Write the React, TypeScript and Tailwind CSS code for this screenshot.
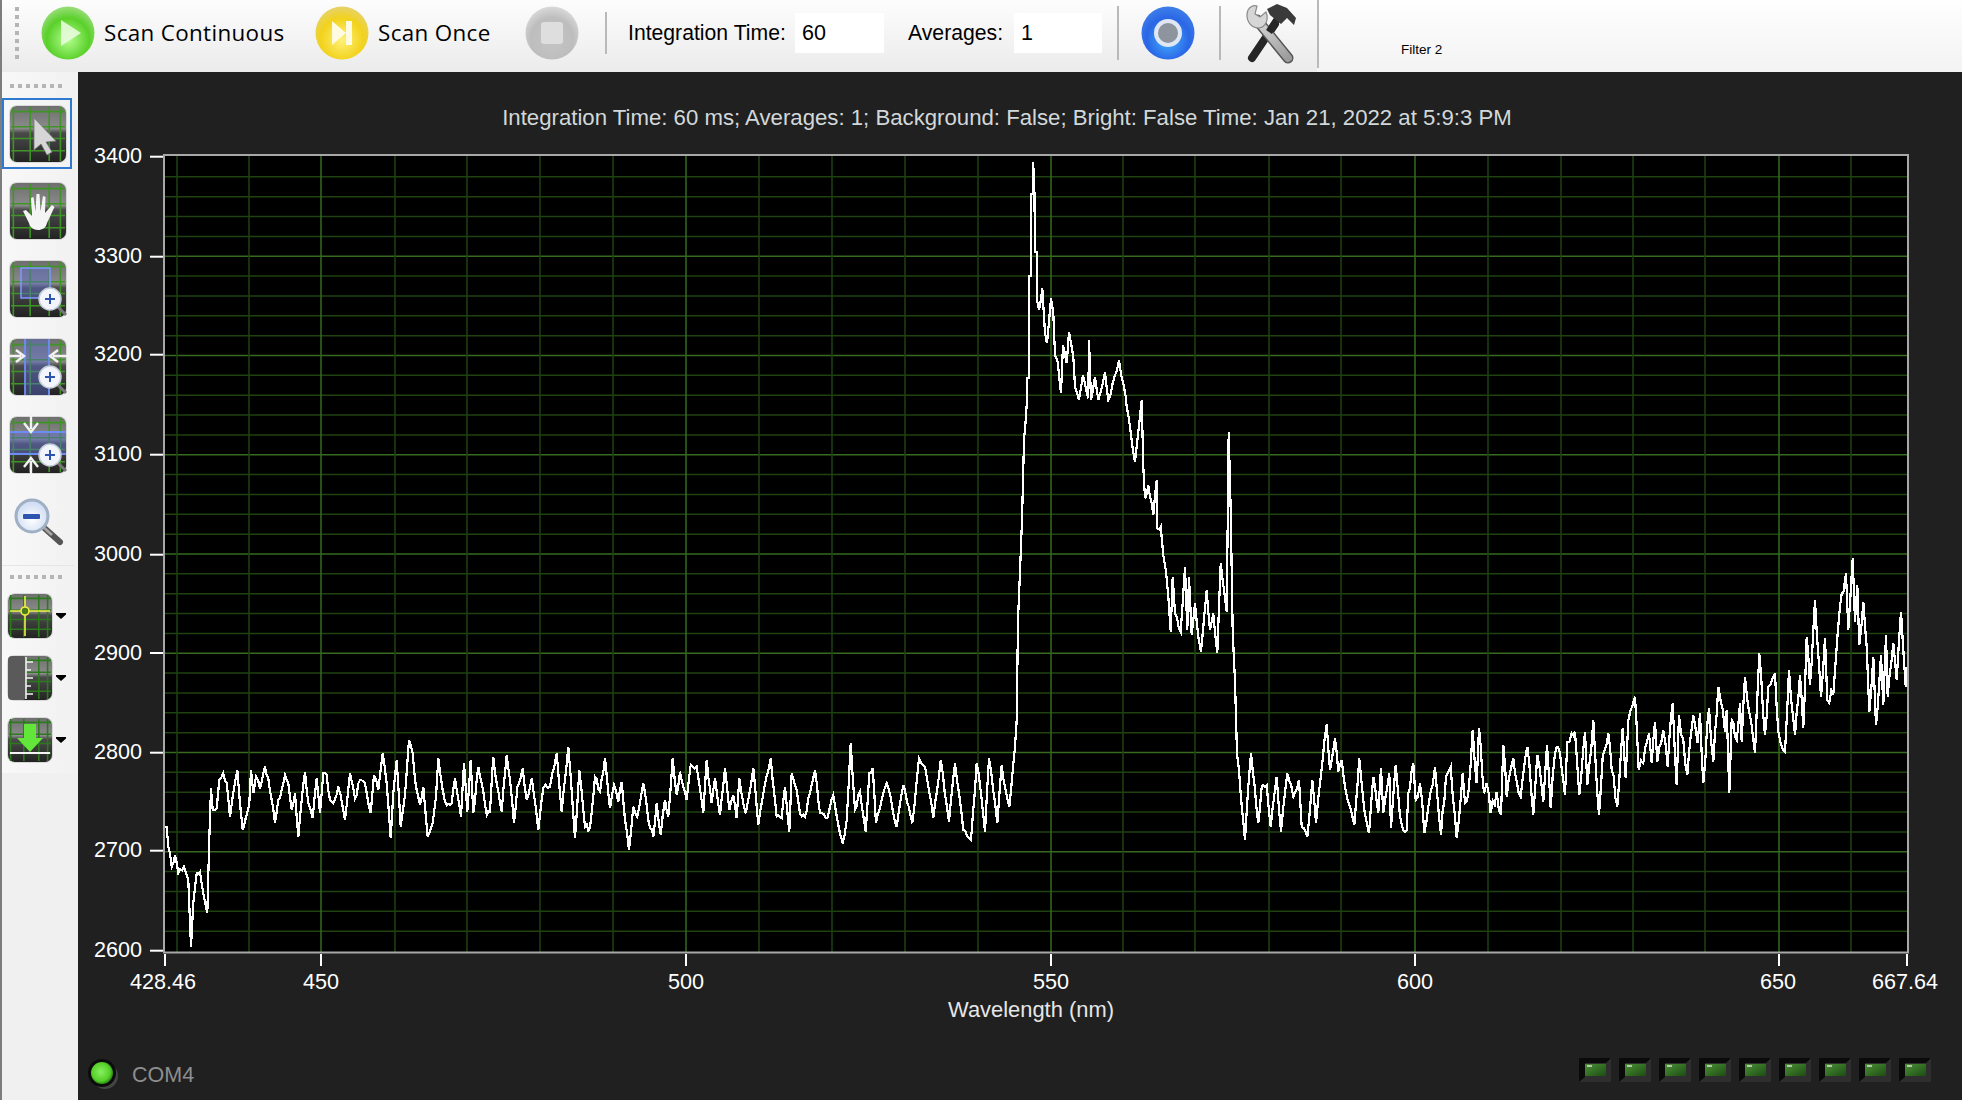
import React from "react";

type P = [number, number];
const z = (ox: number, oy: number, pts: number[]): P[] => {
  const r: P[] = [];
  for (let i = 0; i < pts.length; i += 2) r.push([ox + pts[i] / 3, oy + pts[i + 1] / 3]);
  return r;
};

const anchors: P[] = [
  ...z(0, 780, [495,140,500,140,505,200,515,260,525,225,535,280,552,260,565,300,573,500,580,370,590,280,600,275,610,340,622,400,628,175]),
  ...z(160, 720, [153,205,158,270,170,265,178,180,190,160,200,190,210,290,218,230,232,150,240,250,248,330,258,290,268,250,273,150,280,220,288,170,300,205,315,140,325,175,335,240,345,310,355,240,365,210,375,165,385,190,395,270,405,220,415,350,425,240,435,155,445,250,458,295,470,175,480,280,490,160,500,165,510,240,520,250,535,200,555,300,570,160,585,235,600,180,615,190,632,280,642,165,655,210,668,100,680,190,692,355,700,220,710,120,722,320,735,225,747,60,758,100,768,200,780,255,790,200,803,350,818,310,828,230,835,115,848,210,860,255,875,250,885,175,903,290,912,130,922,275,932,120,940,280,955,140,965,190,980,285,990,275,1000,110,1010,190,1025,275,1040,105,1050,180,1062,310,1072,200,1088,145,1100,240,1115,175,1135,330,1150,205,1170,200,1190,100,1205,275,1225,80,1245,355,1258,150,1275,320,1290,325,1305,170,1320,215]),
  ...z(600, 720, [15,115,30,265,42,195,55,245,65,185,75,300,87,390,100,260,112,290,130,190,145,300,160,350,170,250,182,345,195,240,205,290,218,115,230,225,240,155,260,240,272,135,290,140,310,280,320,120,335,250,345,175,360,285,375,145,388,270,400,225,410,295,418,175,437,280,460,145,475,315,495,190,512,115,530,290,545,295,555,200,568,335,575,160,590,210,600,280,615,290,630,220,645,150,660,280,682,295,700,225,720,340,728,370,740,300,752,70,765,270,780,215,797,335,808,160,818,145,828,310,840,265,860,190,890,320,910,195,937,310,957,115,975,140,1000,295,1022,120,1047,305,1065,130,1090,330,1113,360,1130,130,1140,195,1155,335,1167,115,1192,310,1205,135,1215,200,1228,260,1245,80,1250,0]),
  [1018, 620], [1022, 520], [1024, 440],
  ...z(980, 140, [141,780,141,715,147,715,147,408,153,408,153,162,158,160,159,66,163,120,165,335,171,335,171,480,177,510,187,445,195,580,201,610,213,475,220,520,225,645,233,665,243,760,249,615,260,670,267,577,280,650,285,740,297,780,309,705,325,775,327,600,333,780,345,710,355,780,375,695,385,780,417,660,437,770]),
  ...z(1100, 400, [80,20,105,185,125,0,130,200,135,295,145,255,160,345,170,240,172,385,182,380,190,465,198,515,205,590,212,695,218,530,225,640,242,695,255,500,262,690,267,530,275,705,285,610,295,710,303,755,320,570,330,690,340,640,352,760,362,490,380,635,386,97,392,330,398,695,405,845,411,1060,417,1110,423,1195,435,1320,445,1160,453,1060,475,1270,485,1160,500,1155,512,1280,530,1130,543,1295,562,1120,580,1190,597,1140,605,1280,622,1310,637,1140,648,1270,660,1150,680,972,690,1110,705,1015,715,1115,725,1080,735,1160,755,1240,763,1275,778,1075,793,1230,807,1300,820,1130,835,1240,843,1105,850,1240,868,1120,873,1285,887,1095,900,1250]),
  ...z(1300, 680, [310,450,320,450,325,340,340,250,347,360,360,310,373,460,385,380,405,260,423,465,438,290,452,260,470,475,488,280,495,370,505,340,518,150,530,310,537,145,552,340,560,310,572,400,590,335,603,405,610,195,620,350,640,235,662,350,682,200,700,405,712,225,730,365,741,195,752,385,765,220,780,220,795,345,802,185,815,160,825,155,838,345,855,155,862,315,880,120,897,405]),
  ...z(1600, 540, [8,650,25,580,35,690,52,800,68,565,77,715,85,540,105,470,116,690,130,670,147,580,155,670,165,545,172,665,190,570,203,680,218,490,230,735,237,525,262,705,272,590,280,525,293,610,300,520,310,730,327,505,340,665,355,440,375,575,380,510,388,760,395,540,410,600,420,490,425,605,435,410,465,640,478,340,495,585,505,440,525,400,535,575,555,635,567,390,585,585,600,405,610,565,620,290,630,435,645,180,663,470,675,295,682,480,700,465,720,200,730,160,738,100,745,270,758,55,765,245,772,135,778,315,790,185,800,320,808,515,820,350,828,555,843,345,850,495,858,285,863,470,880,310,890,420,903,215,917,440,925,360]),
];

const buildTrace = (): string => {
  let seed = 7;
  const rnd = () => {
    seed = (seed * 16807) % 2147483647;
    return seed / 2147483647 - 0.5;
  };
  const out: P[] = [];
  for (let i = 0; i < anchors.length - 1; i++) {
    const [x0, y0] = anchors[i];
    const [x1, y1] = anchors[i + 1];
    const n = Math.max(1, Math.round(Math.abs(x1 - x0) / 2));
    const jit = x0 > 1400 ? 14 : 6;
    for (let k = 0; k < n; k++) {
      const t = k / n;
      out.push([x0 + (x1 - x0) * t, y0 + (y1 - y0) * t + (k === 0 ? 0 : rnd() * jit)]);
    }
  }
  out.push(anchors[anchors.length - 1]);
  return out.map((p) => `${p[0].toFixed(1)},${p[1].toFixed(1)}`).join(" ");
};
const trace = buildTrace();

const vGrid: [number, boolean][] = [
  [177,false],[249,false],[321,true],[395,false],[467,false],[540,false],[613,false],[686,true],[759,false],[832,false],[905,false],[978,false],[1051,true],[1123,false],[1195,false],[1269,false],[1341,false],[1415,true],[1488,false],[1561,false],[1633,false],[1705,false],[1779,true],[1851,false],
];
const hGrid = Array.from({ length: 39 }, (_, i) => ({ y: 157 + (i + 1) * 19.85, major: (i + 1) % 5 === 0 }));
const yLabels: [string, number][] = [["3400",156.7],["3300",256.7],["3200",354.7],["3100",454.7],["3000",554.7],["2900",653],["2800",752.7],["2700",850.7],["2600",950.7]];
const xLabels: [string, number, number][] = [
  ["428.46",163,165],["450",321,321],["500",686,686],["550",1051,1051],["600",1415,1415],["650",1778,1779],["667.64",1905,1907],
];

const Ball = ({ id, c0, c1, c2, children }: { id: string; c0: string; c1: string; c2: string; children?: React.ReactNode }) => (
  <svg width="54" height="54" viewBox="0 0 54 54" className="shrink-0">
    <defs>
      <radialGradient id={id} cx="50%" cy="62%" r="62%">
        <stop offset="0%" stopColor={c0} />
        <stop offset="65%" stopColor={c1} />
        <stop offset="100%" stopColor={c2} />
      </radialGradient>
    </defs>
    <circle cx="27" cy="27" r="26.5" fill={`url(#${id})`} />
    {children}
  </svg>
);

const GridBase = ({ id, w = 56, h = 56, children, lines }: { id: string; w?: number; h?: number; children?: React.ReactNode; lines?: string }) => (
  <svg width={w + 12} height={h + 10} viewBox={`-6 -5 ${w + 12} ${h + 10}`} className="shrink-0 overflow-visible">
    <defs>
      <linearGradient id={id} x1="0" y1="0" x2="0" y2="1">
        <stop offset="0%" stopColor="#6f6f6f" />
        <stop offset="40%" stopColor="#8b8b8b" />
        <stop offset="48%" stopColor="#4a4a4a" />
        <stop offset="100%" stopColor="#222222" />
      </linearGradient>
    </defs>
    <rect x="-1" y="-1" width={w + 2} height={h + 2} rx="8" fill="#d8d8d8" />
    <rect x="0" y="0" width={w} height={h} rx="7" fill={`url(#${id})`} />
    <g stroke={lines ?? "#3f9426"} strokeWidth="1.6">
      {[0.06, 0.36, 0.7, 0.9].map((f) => (
        <line key={f} x1={w * f} y1="1" x2={w * f} y2={h - 1} />
      ))}
      {[0.1, 0.37, 0.58, 0.8].map((f) => (
        <line key={f} x1="1" y1={h * f} x2={w - 1} y2={h * f} />
      ))}
    </g>
    {children}
  </svg>
);

const Lens = ({ cx, cy, r = 11 }: { cx: number; cy: number; r?: number }) => (
  <g>
    <line x1={cx + r * 0.7} y1={cy + r * 0.7} x2={cx + r + 5} y2={cy + r + 5} stroke="#777" strokeWidth="3" />
    <circle cx={cx} cy={cy} r={r} fill="#f2f5fb" stroke="#c3cad6" strokeWidth="1.5" />
    <path d={`M${cx - 5} ${cy}H${cx + 5}M${cx} ${cy - 5}V${cy + 5}`} stroke="#2d55b0" strokeWidth="2" />
  </g>
);

const Caret = () => (
  <svg width="10" height="6" viewBox="0 0 10 6" className="-ml-[2px] shrink-0">
    <path d="M0 0H10V1.5L5 6L0 1.5Z" fill="#000" />
  </svg>
);

const Sep = ({ h }: { h: string }) => <div className={`w-[2px] shrink-0 bg-[#b9b9b9] ${h}`} />;

const GripV = () => (
  <div className="flex w-[4px] shrink-0 flex-col gap-[4px]">
    {[0,1,2,3,4,5,6].map((i) => (
      <div key={i} className="h-[4px] w-[4px] bg-[#b5b5b5]" />
    ))}
  </div>
);
const GripH = () => (
  <div className="flex gap-[4px] pl-[8px]">
    {[0,1,2,3,4,5,6].map((i) => (
      <div key={i} className="h-[4px] w-[4px] bg-[#b5b5b5]" />
    ))}
  </div>
);

const SmallLed = ({ i }: { i: number }) => (
  <svg width="32" height="24" viewBox="0 0 32 24" className="shrink-0">
    <defs>
      <linearGradient id={`sl${i}`} x1="0" y1="0" x2="1" y2="1">
        <stop offset="0%" stopColor="#4c9036" />
        <stop offset="100%" stopColor="#1c4c12" />
      </linearGradient>
    </defs>
    <path d="M0 0H32V24H0Z" fill="#2e2e2e" />
    <path d="M0 0H32L27 5H6V19L0 24Z" fill="#0a0a0a" />
    <rect x="6" y="6" width="21" height="12" fill={`url(#sl${i})`} />
    <rect x="8" y="7" width="5" height="2" fill="#b4c8ac" />
  </svg>
);

export default function App() {
  return (
    <div className="flex h-[1100px] w-[1962px] overflow-hidden bg-[#202020]" style={{ fontFamily: '"Liberation Sans", Arial, sans-serif' }}>
      <div className="w-[2px] shrink-0 bg-[#7d7d7d]" />
      <div className="flex min-w-0 flex-1 flex-col">
        {/* Top toolbar */}
        <div className="flex h-[72px] shrink-0 bg-gradient-to-b from-[#fefefe] to-[#f3f3f3]">
          <div className="flex h-[72px] w-[1315px] shrink-0 items-center bg-gradient-to-b from-[#fdfdfd] to-[#ebebeb] pb-[6px] pl-[13px]">
            <GripV />
            <div className="ml-[22px]">
              <Ball id="g1" c0="#b4ff90" c1="#5ad02a" c2="#9ade7c">
                <path d="M20 14L40 27L20 40Z" fill="#e8fbdc" fillOpacity="0.9" />
              </Ball>
            </div>
            <span className="ml-[9px] w-[211px] text-[22.4px] leading-none tracking-[0.35px] text-black" style={{ fontFamily: '"Open Sans", sans-serif' }}>Scan Continuous</span>
            <Ball id="g2" c0="#fff27a" c1="#f2d21c" c2="#e6d26c">
              <path d="M17 15L31 27L17 39Z" fill="#fffbe0" />
              <rect x="31" y="15" width="6" height="24" fill="#fffbe0" />
            </Ball>
            <span className="ml-[9px] w-[147px] text-[22.4px] leading-none tracking-[0.35px] text-black" style={{ fontFamily: '"Open Sans", sans-serif' }}>Scan Once</span>
            <Ball id="g3" c0="#c6c6c6" c1="#bdbdbd" c2="#dadada">
              <rect x="16" y="16" width="22" height="22" rx="3" fill="#dedede" />
            </Ball>
            <div className="ml-[26px]"><Sep h="h-[42px]" /></div>
            <span className="ml-[21px] w-[167px] text-[21.2px] leading-none text-black">Integration Time:</span>
            <div className="flex h-[40px] w-[89px] items-center bg-white pl-[7px] text-[21.5px] text-black">60</div>
            <span className="ml-[24px] w-[106px] text-[21.2px] leading-none text-black">Averages:</span>
            <div className="flex h-[40px] w-[88px] items-center bg-white pl-[7px] text-[21.5px] text-black">1</div>
            <div className="ml-[15px]"><Sep h="h-[54px]" /></div>
            <div className="ml-[22px]">
              <Ball id="g4" c0="#45b4ff" c1="#2a66e6" c2="#3f7fe8">
                <circle cx="27" cy="27" r="14" fill="#dfe7f4" />
                <circle cx="27" cy="27" r="10" fill="#8d949e" />
              </Ball>
            </div>
            <div className="ml-[24px]"><Sep h="h-[54px]" /></div>
            <svg width="54" height="62" viewBox="0 0 54 62" className="ml-[22px] shrink-0">
              <defs>
                <linearGradient id="wr" gradientUnits="userSpaceOnUse" x1="10" y1="10" x2="46" y2="58">
                  <stop offset="0%" stopColor="#e4e4e4" />
                  <stop offset="100%" stopColor="#9a9a9a" />
                </linearGradient>
              </defs>
              <path d="M32 22L9 56" stroke="#262626" strokeWidth="8" strokeLinecap="round" />
              <path d="M14 18L45 56" stroke="#555" strokeWidth="11" strokeLinecap="round" />
              <path d="M14 18L45 56" stroke="url(#wr)" strokeWidth="8" strokeLinecap="round" />
              <path d="M5 8C2 16 6 26 16 26C23 25 26 17 23 10L17 15L12 12L14 4C10 3 7 5 5 8Z" fill="#d6d6d6" stroke="#8a8a8a" strokeWidth="1.2" />
              <path d="M35 16L26 30" stroke="#262626" strokeWidth="7" />
              <path d="M24 7L34 2L44 6L53 16L51 23L44 16L38 22L27 13Z" fill="#3a3a3a" />
            </svg>
          </div>
          <Sep h="h-[68px]" />
          <div className="relative flex flex-1 items-end pb-[16px] pl-[82px]">
            <span className="text-[13.5px] leading-none text-black">Filter 2</span>
          </div>
        </div>

        <div className="flex min-h-0 flex-1">
          {/* Left toolbar */}
          <div className="flex w-[76px] shrink-0 flex-col bg-[#f0f0f0]">
            <div className="flex h-[701px] flex-col bg-gradient-to-r from-[#f8f8f8] to-[#f1f1f1]">
              <div className="pt-[12px]"><GripH /></div>
              <div className="mt-[10px] flex h-[71px] w-[70px] items-center border-2 border-[#2f7ad0]">
                <GridBase id="i1">
                  <path d="M24 12L24 44L31 38L37 49L42 46L36 36L46 35Z" fill="#d6d6d6" stroke="#777" strokeWidth="0.8" />
                </GridBase>
              </div>
              <div className="flex h-[78px] w-[70px] items-start pl-[2px] pt-[9px]">
                <GridBase id="i2">
                  <path d="M13 28L16 27L22 33L21 15L23.5 14L25.5 28L26.5 11L29.5 11L30.5 28L33 13L35.5 14L35 30L42 22L44.5 24L37 40C36 45 32 47 28 47C23 47 20 44 19 40Z" fill="#f4f4f4" />
                </GridBase>
              </div>
              <div className="flex h-[78px] w-[70px] items-start pl-[2px] pt-[9px]">
                <GridBase id="i3">
                  <rect x="11" y="7" width="29" height="30" fill="#5869c8" fillOpacity="0.45" stroke="#7f98ff" strokeWidth="1.5" />
                  <Lens cx={40} cy={38} />
                </GridBase>
              </div>
              <div className="flex h-[78px] w-[70px] items-start pl-[2px] pt-[9px]">
                <GridBase id="i4">
                  <rect x="15" y="0" width="24" height="56" fill="#5869c8" fillOpacity="0.45" />
                  <path d="M15 0V56M39 0V56" stroke="#6e8cf5" strokeWidth="1.8" />
                  <path d="M-3 17H11M6 11L14 17L6 23M57 17H43M48 11L40 17L48 23" stroke="#f2f2f2" strokeWidth="2.4" fill="none" />
                  <Lens cx={40} cy={38} />
                </GridBase>
              </div>
              <div className="flex h-[78px] w-[70px] items-start pl-[2px] pt-[9px]">
                <GridBase id="i5">
                  <rect x="0" y="15" width="56" height="22" fill="#5869c8" fillOpacity="0.45" />
                  <path d="M0 15H56M0 37H56" stroke="#6e8cf5" strokeWidth="1.8" />
                  <path d="M21 -3V12M14 6L21 15L28 6M21 58V44M14 50L21 41L28 50" stroke="#f2f2f2" strokeWidth="2.4" fill="none" />
                  <Lens cx={40} cy={38} />
                </GridBase>
              </div>
              <div className="flex h-[84px] w-[70px] items-start justify-center pl-[1px] pt-[15px]">
                <svg width="52" height="52" viewBox="0 0 52 52" className="shrink-0">
                  <defs>
                    <radialGradient id="zo" cx="50%" cy="60%" r="60%">
                      <stop offset="0%" stopColor="#ffffff" />
                      <stop offset="100%" stopColor="#c9d8f2" />
                    </radialGradient>
                  </defs>
                  <line x1="29" y1="29" x2="48" y2="46" stroke="#555" strokeWidth="6" strokeLinecap="round" />
                  <line x1="29" y1="29" x2="40" y2="39" stroke="#a5a5a5" strokeWidth="3" />
                  <circle cx="20" cy="20" r="16" fill="url(#zo)" stroke="#9fafc4" strokeWidth="3" />
                  <rect x="11" y="18" width="17" height="5" rx="1" fill="#2d55b0" />
                </svg>
              </div>
              <div className="h-[1px] w-[72px] bg-[#e6e6e6]" />
              <div className="pt-[9px]"><GripH /></div>
              <div className="mt-[6px] flex h-[62px] items-center">
                <GridBase id="s1" w={44} h={44} lines="#2c7a1d">
                  <path d="M2 17H42M17 2V42" stroke="#f0f040" strokeWidth="1.6" />
                  <circle cx="17" cy="17" r="4" fill="#4a7a20" stroke="#f0f040" strokeWidth="1.6" />
                </GridBase>
                <Caret />
              </div>
              <div className="flex h-[62px] items-center">
                <GridBase id="s2" w={44} h={44} lines="#2c7a1d">
                  <rect x="0" y="0" width="18" height="44" rx="4" fill="#5a5a5a" />
                  <path d="M18 1V43M18 6H25M18 14H23M18 22H25M18 30H23M18 38H25" stroke="#f2f2f2" strokeWidth="1.6" />
                </GridBase>
                <Caret />
              </div>
              <div className="flex h-[62px] items-center">
                <GridBase id="s3" w={44} h={44} lines="#2c7a1d">
                  <path d="M16 6H28V20H35L22 34L9 20H16Z" fill="#62e63a" />
                  <path d="M2 35H42" stroke="#f4f4f4" strokeWidth="1.8" />
                </GridBase>
                <Caret />
              </div>
            </div>
          </div>

          {/* Chart area */}
          <div className="flex min-w-0 flex-1 flex-col bg-[#202020]">
            <div className="flex h-[68px] shrink-0 items-end justify-center pb-[9px] pr-[26px]">
              <span className="text-[22.2px] leading-[26px] text-[#d2d8da]">Integration Time: 60 ms; Averages: 1; Background: False; Bright: False Time: Jan 21, 2022 at 5:9:3 PM</span>
            </div>
            <svg width="1884" height="890" viewBox="78 140 1884 890" className="block shrink-0" style={{ fontFamily: '"Liberation Sans", Arial, sans-serif' }}>
              <rect x="164" y="155" width="1744" height="797" fill="#000" />
              {hGrid.map((l) => (
                <line key={l.y} x1="164" x2="1908" y1={l.y} y2={l.y} stroke={l.major ? "#356a20" : "#1f4210"} strokeWidth="1.5" />
              ))}
              {vGrid.map(([x, m]) => (
                <line key={x} y1="155" y2="952" x1={x} x2={x} stroke={m ? "#356a20" : "#1f4210"} strokeWidth="1.5" />
              ))}
              <polyline points={trace} fill="none" stroke="#fff" strokeWidth="2.2" strokeLinejoin="miter" shapeRendering="crispEdges" />
              <rect x="164" y="155" width="1744" height="797.5" fill="none" stroke="#a8a8a8" strokeWidth="2" />
              {yLabels.map(([t, y]) => (
                <g key={t}>
                  <line x1="150" x2="163" y1={y} y2={y} stroke="#fff" strokeWidth="2" />
                  <text x="142" y={y + 6.5} textAnchor="end" fontSize="21.6" fill="#fff">{t}</text>
                </g>
              ))}
              {xLabels.map(([t, cx, tx]) => (
                <g key={t}>
                  <line x1={tx} x2={tx} y1="954" y2="966" stroke="#fff" strokeWidth="2" />
                  <text x={cx} y="989" textAnchor="middle" fontSize="21.6" fill="#fff">{t}</text>
                </g>
              ))}
              <text x="1031" y="1017" textAnchor="middle" fontSize="21.9" fill="#e6e6e6">Wavelength (nm)</text>
            </svg>
            <div className="flex min-h-0 flex-1 items-center pl-[10px] pr-[31px] pt-[18px]">
              <svg width="30" height="32" viewBox="0 0 30 32" className="shrink-0">
                <defs>
                  <radialGradient id="led" cx="45%" cy="45%" r="55%">
                    <stop offset="0%" stopColor="#88f060" />
                    <stop offset="75%" stopColor="#55d028" />
                    <stop offset="100%" stopColor="#2e8a14" />
                  </radialGradient>
                </defs>
                <circle cx="17" cy="18" r="13" fill="#444" />
                <circle cx="14" cy="15" r="14" fill="#0c0c0c" />
                <circle cx="14" cy="15" r="11" fill="url(#led)" />
              </svg>
              <span className="ml-[14px] mt-[3px] text-[21.5px] leading-none text-[#8e8e8e]">COM4</span>
              <div className="ml-auto flex gap-[8px] pb-[8px]">
                {[0,1,2,3,4,5,6,7,8].map((i) => (
                  <SmallLed key={i} i={i} />
                ))}
              </div>
            </div>
          </div>
        </div>
      </div>
    </div>
  );
}
